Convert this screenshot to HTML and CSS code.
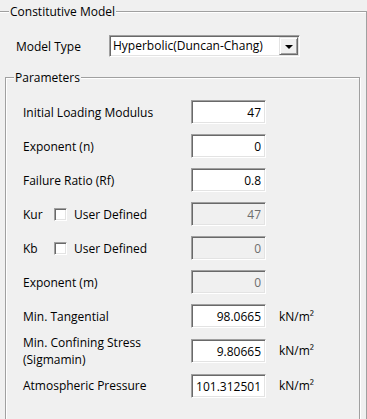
FILE: index.html
```html
<!DOCTYPE html>
<html lang="en">
<head>
    <meta charset="UTF-8">
    <meta name="viewport" content="width=device-width, initial-scale=1.0">
    <title>Constitutive Model</title>
    <link rel="stylesheet" href="styles.css">
</head>
<body>
    <div class="group outer">
        <span class="group-title">Constitutive Model</span>

        <div class="model-row">
            <span class="model-label">Model Type</span>
            <div class="combo">
                <span class="combo-text">Hyperbolic(Duncan-Chang)</span>
                <span class="combo-btn"><span class="arrow"></span></span>
            </div>
        </div>

        <!-- Parameters -->
        <div class="group inner">
            <span class="group-title">Parameters</span>
            <div class="param-grid">
                <span class="label">Initial Loading Modulus</span>
                <input class="field" type="text" value="47">
                <span class="unit"></span>

                <span class="label">Exponent (n)</span>
                <input class="field" type="text" value="0">
                <span class="unit"></span>

                <span class="label">Failure Ratio (Rf)</span>
                <input class="field" type="text" value="0.8">
                <span class="unit"></span>

                <span class="label check-label">
                    <span class="short">Kur</span>
                    <input class="check" type="checkbox">
                    <span>User Defined</span>
                </span>
                <input class="field" type="text" value="47" disabled>
                <span class="unit"></span>

                <span class="label check-label">
                    <span class="short">Kb</span>
                    <input class="check" type="checkbox">
                    <span>User Defined</span>
                </span>
                <input class="field" type="text" value="0" disabled>
                <span class="unit"></span>

                <span class="label">Exponent (m)</span>
                <input class="field" type="text" value="0" disabled>
                <span class="unit"></span>

                <span class="label">Min. Tangential</span>
                <input class="field" type="text" value="98.0665">
                <span class="unit">kN/m²</span>

                <span class="label two-line"><span class="line">Min. Confining Stress</span><span class="line">(Sigmamin)</span></span>
                <input class="field" type="text" value="9.80665">
                <span class="unit">kN/m²</span>

                <span class="label">Atmospheric Pressure</span>
                <input class="field" type="text" value="101.312501">
                <span class="unit">kN/m²</span>
            </div>
        </div>
    </div>
</body>
</html>
```

FILE: styles.css
```css
* {
    margin: 0;
    padding: 0;
    box-sizing: border-box;
}

body {
    font-family: 'Open Sans', 'Noto Sans', sans-serif;
    font-size: 12px;
    line-height: 15px;
    color: #000;
    background: #f0f0f0;
    height: 419px;
    overflow: hidden;
}

/* Group boxes */
.group {
    position: relative;
    border: 1px solid #a0a0a0;
    box-shadow: inset 1px 1px 0 #fff, 1px 1px 0 #fff;
}

.group-title {
    position: absolute;
    top: -8px;
    background: #f0f0f0;
    padding: 0 1px;
    white-space: nowrap;
}

.outer {
    margin: 11px 0 0 -2px;
    width: 369px;
    padding: 23px 6px 10px 6px;
}

.outer > .group-title {
    left: 10px;
}

.inner {
    margin-top: 20px;
    padding: 22px 0 30px 17px;
}

.inner > .group-title {
    left: 8px;
}

/* Model type row */
.model-row {
    display: flex;
    align-items: center;
    padding-left: 11px;
}

.model-label {
    width: 93px;
}

.combo {
    width: 191px;
    height: 22px;
    display: flex;
    background: #fff;
    border: 1px solid;
    border-color: #a0a0a0 #fff #fff #a0a0a0;
    box-shadow: inset 1px 1px 0 #696969, inset -1px -1px 0 #e3e3e3;
    padding: 1px;
}

.combo-text {
    flex: 1;
    padding-left: 2px;
    line-height: 18px;
}

.combo-btn {
    width: 19px;
    height: 18px;
    background: #f0f0f0;
    border: 1px solid;
    border-color: #e3e3e3 #696969 #696969 #e3e3e3;
    box-shadow: inset 1px 1px 0 #fff, inset -1px -1px 0 #a0a0a0;
    display: flex;
    align-items: center;
    justify-content: center;
}

.arrow {
    width: 0;
    height: 0;
    border-left: 4px solid transparent;
    border-right: 4px solid transparent;
    border-top: 4px solid #000;
    margin-top: 1px;
}

/* Parameter rows */
.param-grid {
    display: grid;
    grid-template-columns: 168px 75px auto;
    grid-template-rows: repeat(7, 24px) 25px 25px;
    row-gap: 10px;
    align-items: end;
}

.label {
    align-self: center;
    white-space: nowrap;
}

.two-line {
    display: flex;
    flex-direction: column;
}

.two-line .line {
    line-height: 17px;
}

.check-label {
    display: flex;
    align-items: center;
}

.short {
    width: 31px;
}

.check {
    appearance: none;
    width: 13px;
    height: 13px;
    margin-right: 7px;
    background: #fff;
    border: 1px solid;
    border-color: #a0a0a0 #fff #fff #a0a0a0;
    box-shadow: inset 1px 1px 0 #696969, inset -1px -1px 0 #e3e3e3;
}

.field {
    width: 75px;
    height: 24px;
    font: inherit;
    color: #000;
    text-align: right;
    padding: 0 4px 0 2px;
    background: #fff;
    border: 1px solid;
    border-color: #a0a0a0 #fff #fff #a0a0a0;
    box-shadow: inset 1px 1px 0 #696969, inset -1px -1px 0 #e3e3e3;
    outline: none;
}

.field:disabled {
    background: #f0f0f0;
    color: #6d6d6d;
}

.unit {
    align-self: center;
    padding-left: 13px;
    white-space: nowrap;
}
```
